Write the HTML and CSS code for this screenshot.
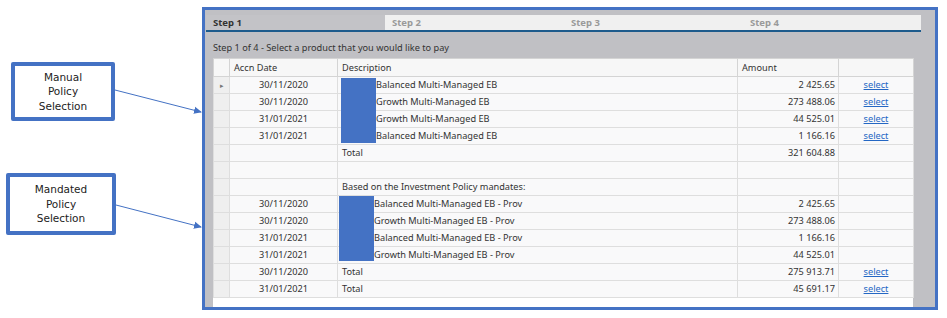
FILE: index.html
```html
<!DOCTYPE html>
<html lang="en">
<head>
  <meta charset="UTF-8" />
  <title>Policy payment - Step 1</title>
  <link rel="stylesheet" href="styles.css">
</head>
<body>
<div class="page">

  <!-- callouts on the left -->
  <div class="notes">
    <div class="note note-manual">Manual<br>Policy<br>Selection</div>
    <div class="note note-mandated">Mandated<br>Policy<br>Selection</div>
  </div>

  <!-- the captured wizard -->
  <div class="frame">
    <div class="tabs">
      <div class="tab active">Step 1</div>
      <div class="tab">Step 2</div>
      <div class="tab">Step 3</div>
      <div class="tab">Step 4</div>
    </div>
    <div class="hint">Step 1 of 4 - Select a product that you would like to pay</div>

    <div class="grid-panel">
      <table class="grid">
        <colgroup>
          <col class="c-head"><col class="c-date"><col class="c-desc"><col class="c-amt"><col class="c-sel">
        </colgroup>
        <thead>
          <tr><th></th><th>Accn Date</th><th>Description</th><th>Amount</th><th></th></tr>
        </thead>
        <tbody>
          <tr><td class="rh"><span class="cur">&#9656;</span></td><td class="date">30/11/2020</td><td class="desc masked">Balanced Multi-Managed EB</td><td class="amt">2 425.65</td><td class="sel"><a href="#">select</a></td></tr>
          <tr><td class="rh"></td><td class="date">30/11/2020</td><td class="desc masked">Growth Multi-Managed EB</td><td class="amt">273 488.06</td><td class="sel"><a href="#">select</a></td></tr>
          <tr><td class="rh"></td><td class="date">31/01/2021</td><td class="desc masked">Growth Multi-Managed EB</td><td class="amt">44 525.01</td><td class="sel"><a href="#">select</a></td></tr>
          <tr><td class="rh"></td><td class="date">31/01/2021</td><td class="desc masked">Balanced Multi-Managed EB</td><td class="amt">1 166.16</td><td class="sel"><a href="#">select</a></td></tr>
          <tr><td class="rh"></td><td class="date"></td><td class="desc">Total</td><td class="amt">321 604.88</td><td class="sel"></td></tr>
          <tr><td class="rh"></td><td class="date"></td><td class="desc"></td><td class="amt"></td><td class="sel"></td></tr>
          <tr><td class="rh"></td><td class="date"></td><td class="desc">Based on the Investment Policy mandates:</td><td class="amt"></td><td class="sel"></td></tr>
          <tr><td class="rh"></td><td class="date">30/11/2020</td><td class="desc masked-b">Balanced Multi-Managed EB - Prov</td><td class="amt">2 425.65</td><td class="sel"></td></tr>
          <tr><td class="rh"></td><td class="date">30/11/2020</td><td class="desc masked-b">Growth Multi-Managed EB - Prov</td><td class="amt">273 488.06</td><td class="sel"></td></tr>
          <tr><td class="rh"></td><td class="date">31/01/2021</td><td class="desc masked-b">Balanced Multi-Managed EB - Prov</td><td class="amt">1 166.16</td><td class="sel"></td></tr>
          <tr><td class="rh"></td><td class="date">31/01/2021</td><td class="desc masked-b">Growth Multi-Managed EB - Prov</td><td class="amt">44 525.01</td><td class="sel"></td></tr>
          <tr><td class="rh"></td><td class="date">30/11/2020</td><td class="desc">Total</td><td class="amt">275 913.71</td><td class="sel"><a href="#">select</a></td></tr>
          <tr><td class="rh"></td><td class="date">31/01/2021</td><td class="desc">Total</td><td class="amt">45 691.17</td><td class="sel"><a href="#">select</a></td></tr>
        </tbody>
      </table>
      <!-- policy numbers blanked out -->
      <div class="redact redact-a"></div>
      <div class="redact redact-b"></div>
    </div>
  </div>

  <svg class="arrows" width="947" height="318" viewBox="0 0 947 318">
    <defs>
      <marker id="head" markerWidth="8" markerHeight="8" refX="7" refY="4" orient="auto" markerUnits="userSpaceOnUse">
        <path d="M0,0.5 L8,4 L0,7.5 Z" fill="#4472c4" />
      </marker>
    </defs>
    <line x1="115" y1="90" x2="201" y2="112" stroke="#4472c4" stroke-width="1" marker-end="url(#head)" />
    <line x1="116" y1="205" x2="201" y2="227" stroke="#4472c4" stroke-width="1" marker-end="url(#head)" />
  </svg>
</div>
</body>
</html>
```

FILE: styles.css
```css
body {
  margin: 0;
  background: #fff;
  font-family: "Noto Sans", "Open Sans", sans-serif;
  color: #333;
}

.page {
  position: relative;
  display: flex;
  width: 947px;
  height: 318px;
}

/* callouts */
.notes {
  width: 202px;
  flex: none;
  display: flex;
  flex-direction: column;
  padding-top: 62px;
  box-sizing: border-box;
}
.note {
  box-sizing: border-box;
  border: 4px solid #4472c4;
  border-radius: 2px;
  display: flex;
  align-items: center;
  justify-content: center;
  text-align: center;
  font-family: "DejaVu Sans", sans-serif;
  font-size: 10.5px;
  line-height: 14.5px;
  color: #222;
}
.note-manual {
  margin-left: 11px;
  width: 104px;
  height: 59px;
}
.note-mandated {
  margin-left: 6px;
  margin-top: 52px;
  width: 110px;
  height: 62px;
}

.arrows {
  position: absolute;
  left: 0;
  top: 0;
  pointer-events: none;
}

/* window */
.frame {
  margin-top: 7px;
  width: 736px;
  height: 303px;
  box-sizing: border-box;
  border: 3px solid #4472c4;
  background: #c0c0c4;
  display: flex;
  flex-direction: column;
  padding: 5px 14px 0 1px;
}

.tabs {
  display: flex;
  height: 17px;
  box-sizing: border-box;
  border-bottom: 2px solid #1d5b8c;
  background: #f0f0f0;
}
.tab {
  width: 179px;
  box-sizing: border-box;
  padding-left: 7px;
  font-size: 9.5px;
  font-weight: bold;
  line-height: 15px;
  color: #9a9a9a;
}
.tab:last-child {
  width: 178px;
}
.tab.active {
  background: #c3c3c7;
  color: #333;
}

.hint {
  height: 26px;
  box-sizing: border-box;
  padding: 9px 0 0 7px;
  font-size: 9.2px;
  line-height: 14px;
  color: #333;
}

.grid-panel {
  position: relative;
  flex: 1;
  margin-left: 7px;
  width: 700px;
  background: #fff;
}

.grid {
  width: 700px;
  border-collapse: collapse;
  table-layout: fixed;
  font-size: 9.2px;
}
.c-head { width: 16px; }
.c-date { width: 108px; }
.c-desc { width: 400px; }
.c-amt { width: 101px; }
.c-sel { width: 75px; }

.grid th {
  height: 17px;
  padding: 0 4px;
  text-align: left;
  font-weight: normal;
  background: #f7f7f7;
  border: 1px solid #d4d4d4;
  white-space: nowrap;
}
.grid td {
  height: 16px;
  padding: 0 4px;
  background: #f9f9fa;
  border: 1px solid #dedede;
  white-space: nowrap;
  line-height: 14px;
}
.grid td.rh {
  background: #efefef;
  padding: 0;
  text-align: center;
}
.cur {
  font-size: 7px;
  color: #777;
}
.grid td.date {
  text-align: center;
}
.grid td.amt {
  text-align: right;
  padding-right: 3px;
}
.grid td.sel {
  text-align: center;
}
.grid td.masked {
  padding-left: 38px;
}
.grid td.masked-b {
  padding-left: 36px;
}
.sel a {
  color: #2467c4;
  text-decoration: underline;
}

.redact {
  position: absolute;
  width: 35px;
  height: 65px;
  background: #4472c4;
}
.redact-a {
  left: 128px;
  top: 20px;
}
.redact-b {
  left: 126px;
  top: 138px;
}
```
